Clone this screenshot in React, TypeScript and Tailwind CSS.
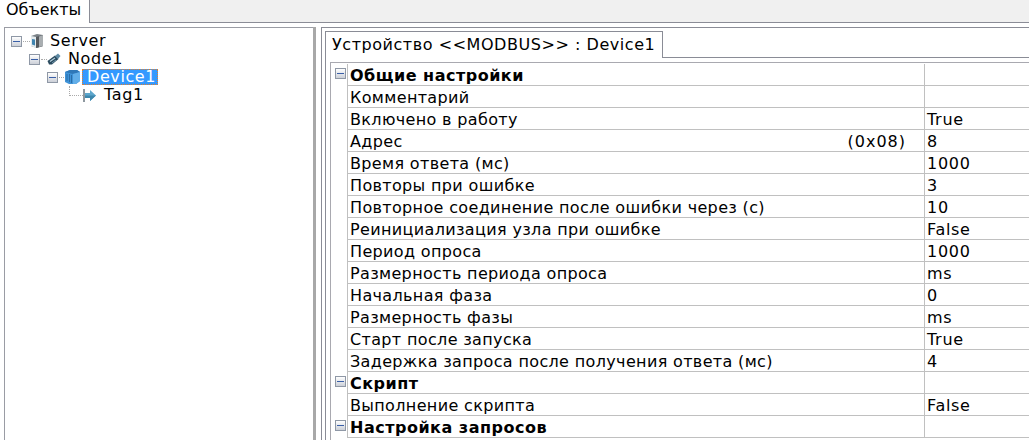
import React from "react";

const font = { fontFamily: '"DejaVu Sans", sans-serif' };

type Row = { name: string; value?: string; hint?: string; group?: boolean };

const rows: Row[] = [
  { name: "Общие настройки", group: true },
  { name: "Комментарий" },
  { name: "Включено в работу", value: "True" },
  { name: "Адрес", value: "8", hint: "(0x08)" },
  { name: "Время ответа (мс)", value: "1000" },
  { name: "Повторы при ошибке", value: "3" },
  { name: "Повторное соединение после ошибки через (с)", value: "10" },
  { name: "Реинициализация узла при ошибке", value: "False" },
  { name: "Период опроса", value: "1000" },
  { name: "Размерность периода опроса", value: "ms" },
  { name: "Начальная фаза", value: "0" },
  { name: "Размерность фазы", value: "ms" },
  { name: "Старт после запуска", value: "True" },
  { name: "Задержка запроса после получения ответа (мс)", value: "4" },
  { name: "Скрипт", group: true },
  { name: "Выполнение скрипта", value: "False" },
  { name: "Настройка запросов", group: true },
];

function Expander() {
  return (
    <span className="flex h-[11px] w-[11px] shrink-0 items-center justify-center border border-[#8f98a6] bg-gradient-to-b from-[#ffffff] to-[#ccd0d8]">
      <span className="h-px w-[7px] bg-[#3a5fa8]" />
    </span>
  );
}

function ServerIcon() {
  return (
    <svg width="14" height="16" viewBox="0 0 14 16" className="shrink-0">
      <path d="M1 3 L7 1 L13 2 L13 13 L7 15 L1 13 Z" fill="#7b8288" />
      <path d="M1 3 L6 4 L6 15 L1 13 Z" fill="#e4ebee" />
      <path d="M6 4 L13 2 L13 13 L6 15 Z" fill="#55595d" />
      <path d="M9 3.5 L13 2 L13 13 L9 14 Z" fill="#a9aeb1" />
      <path d="M2 6 L5 6.6 L5 12.5 L2 11.6 Z" fill="#3f84b0" />
    </svg>
  );
}

function NodeIcon() {
  return (
    <svg width="14" height="12" viewBox="0 0 14 12" className="shrink-0">
      <path d="M0.5 8 L8 2.5 L11.5 6 L5 11.5 L2 11.5 Z" fill="#2a4a5e" />
      <path d="M8 3 L11 0.5 L13.5 3 L11 6 Z" fill="#5f8aa3" />
      <path d="M3 8.5 L8 5" stroke="#b4cfdd" strokeWidth="1.2" />
      <path d="M5 10 L9 7" stroke="#6f97ad" strokeWidth="1" />
    </svg>
  );
}

function DeviceIcon() {
  return (
    <svg width="17" height="16" viewBox="0 0 17 16" className="shrink-0">
      <path d="M1 3 L6 1 L13 1 L16 3 L16 12 L12 15 L5 15 L1 13 Z" fill="#3f93d8" />
      <path d="M1 3 L6 1 L13 1 L16 3 L9 5 Z" fill="#2f78b8" />
      <path d="M9 5 L16 3 L16 12 L12 15 L9 15 Z" fill="#62aee8" />
      <path d="M3 5 L3 12 M5.5 5 L5.5 13 M7.5 6 L7.5 14" stroke="#2a6ea8" strokeWidth="1" />
    </svg>
  );
}

function TagIcon() {
  return (
    <svg width="13" height="13" viewBox="0 0 13 13" className="shrink-0">
      <rect x="0" y="0" width="2" height="13" fill="#8e989f" />
      <path d="M2 4 L7 4 L7 1 L13 6.5 L7 12 L7 9 L2 9 Z" fill="#5da6cc" />
      <path d="M7 6.5 L13 6.5 L7 12 L7 9 L2 9 L2 6.5 Z" fill="#3d87ad" />
    </svg>
  );
}

function Tree() {
  return (
    <div className="flex flex-col pt-[4px] text-[16px] leading-[18px] tracking-[0.6px] text-black">
      <div className="flex h-[18px] items-center pl-[6px]">
        <Expander />
        <span className="ml-[1px] h-0 w-[7px] border-t border-dotted border-[#aaa]" />
        <ServerIcon />
        <span className="ml-[6px]">Server</span>
      </div>
      <div className="flex h-[18px] items-center pl-[24px]">
        <Expander />
        <span className="ml-[1px] h-0 w-[6px] border-t border-dotted border-[#aaa]" />
        <NodeIcon />
        <span className="ml-[7px]">Node1</span>
      </div>
      <div className="flex h-[18px] items-center pl-[42px]">
        <Expander />
        <span className="ml-[1px] h-0 w-[5px] border-t border-dotted border-[#aaa]" />
        <DeviceIcon />
        <span className="ml-[1px] flex h-[16px] w-[76px] items-center border border-dotted border-[#e08030] bg-[#3399ff] pl-[4px] text-white">
          Device1
        </span>
      </div>
      <div className="flex h-[18px] items-center pl-[64px]">
        <span className="mb-[9px] h-[10px] w-[14px] border-b border-l border-dotted border-[#aaa]" />
        <TagIcon />
        <span className="ml-[8px]">Tag1</span>
      </div>
    </div>
  );
}

function PropertyRow({ row }: { row: Row }) {
  return (
    <div className="flex h-[22px] shrink-0">
      <div className="flex w-[16px] shrink-0 justify-end pr-[1px] pt-[4px]">{row.group && <Expander />}</div>
      <div
        className={`flex w-[577px] shrink-0 items-center justify-between border-b border-l border-[#c0c0c0] pl-[2px] pr-[18px] pt-[2px] ${
          row.group ? "font-bold tracking-[0.5px]" : "tracking-[0.35px]"
        }`}
      >
        <span>{row.name}</span>
        {row.hint && <span className="tracking-[1px]">{row.hint}</span>}
      </div>
      <div className="flex min-w-0 flex-1 items-center border-b border-l border-[#c0c0c0] pl-[2px] pt-[2px] tracking-[0.7px]">
        {row.value}
      </div>
    </div>
  );
}

export default function App() {
  return (
    <div className="flex h-screen w-screen flex-col overflow-hidden bg-white text-[16px] text-black" style={font}>
      {/* top tab strip */}
      <div className="flex h-[23px] shrink-0">
        <div className="flex w-[89px] items-center pl-[6px] pb-[4px] leading-[18px]">Объекты</div>
        <div className="flex-1 border-b border-l border-[#8a8c96] bg-[#f0f0f0]" />
      </div>

      <div className="flex min-h-0 flex-1 pt-[4px] pl-[4px]">
        {/* left panel */}
        <div className="w-[309px] shrink-0 border-l border-t border-[#9a9ca4]">
          <Tree />
        </div>

        {/* splitter */}
        <div className="w-[3px] shrink-0 bg-[#a8a8a8]" />

        {/* right panel */}
        <div className="ml-[5px] flex min-w-0 flex-1 border-l border-t border-[#8a8c96] pl-[3px] pt-[3px]">
          <div className="flex min-w-0 flex-1 flex-col border-l border-[#8a8c96]">
            <div className="flex h-[27px] shrink-0">
              <div className="flex w-[337px] items-center border-r border-t border-[#8a8c96] pl-[6px] leading-[18px] tracking-[0.55px]">
                Устройство &lt;&lt;MODBUS&gt;&gt; : Device1
              </div>
              <div className="flex-1 border-b border-[#8a8c96]" />
            </div>
            <div className="flex min-h-0 flex-1 flex-col overflow-hidden pl-[4px] pt-[4px]">
              <div className="flex flex-1 flex-col border-l border-t border-[#a9a9b0] pt-[1px] leading-[18px]">
                {rows.map((row) => (
                  <PropertyRow key={row.name} row={row} />
                ))}
              </div>
            </div>
          </div>
        </div>
      </div>
    </div>
  );
}
